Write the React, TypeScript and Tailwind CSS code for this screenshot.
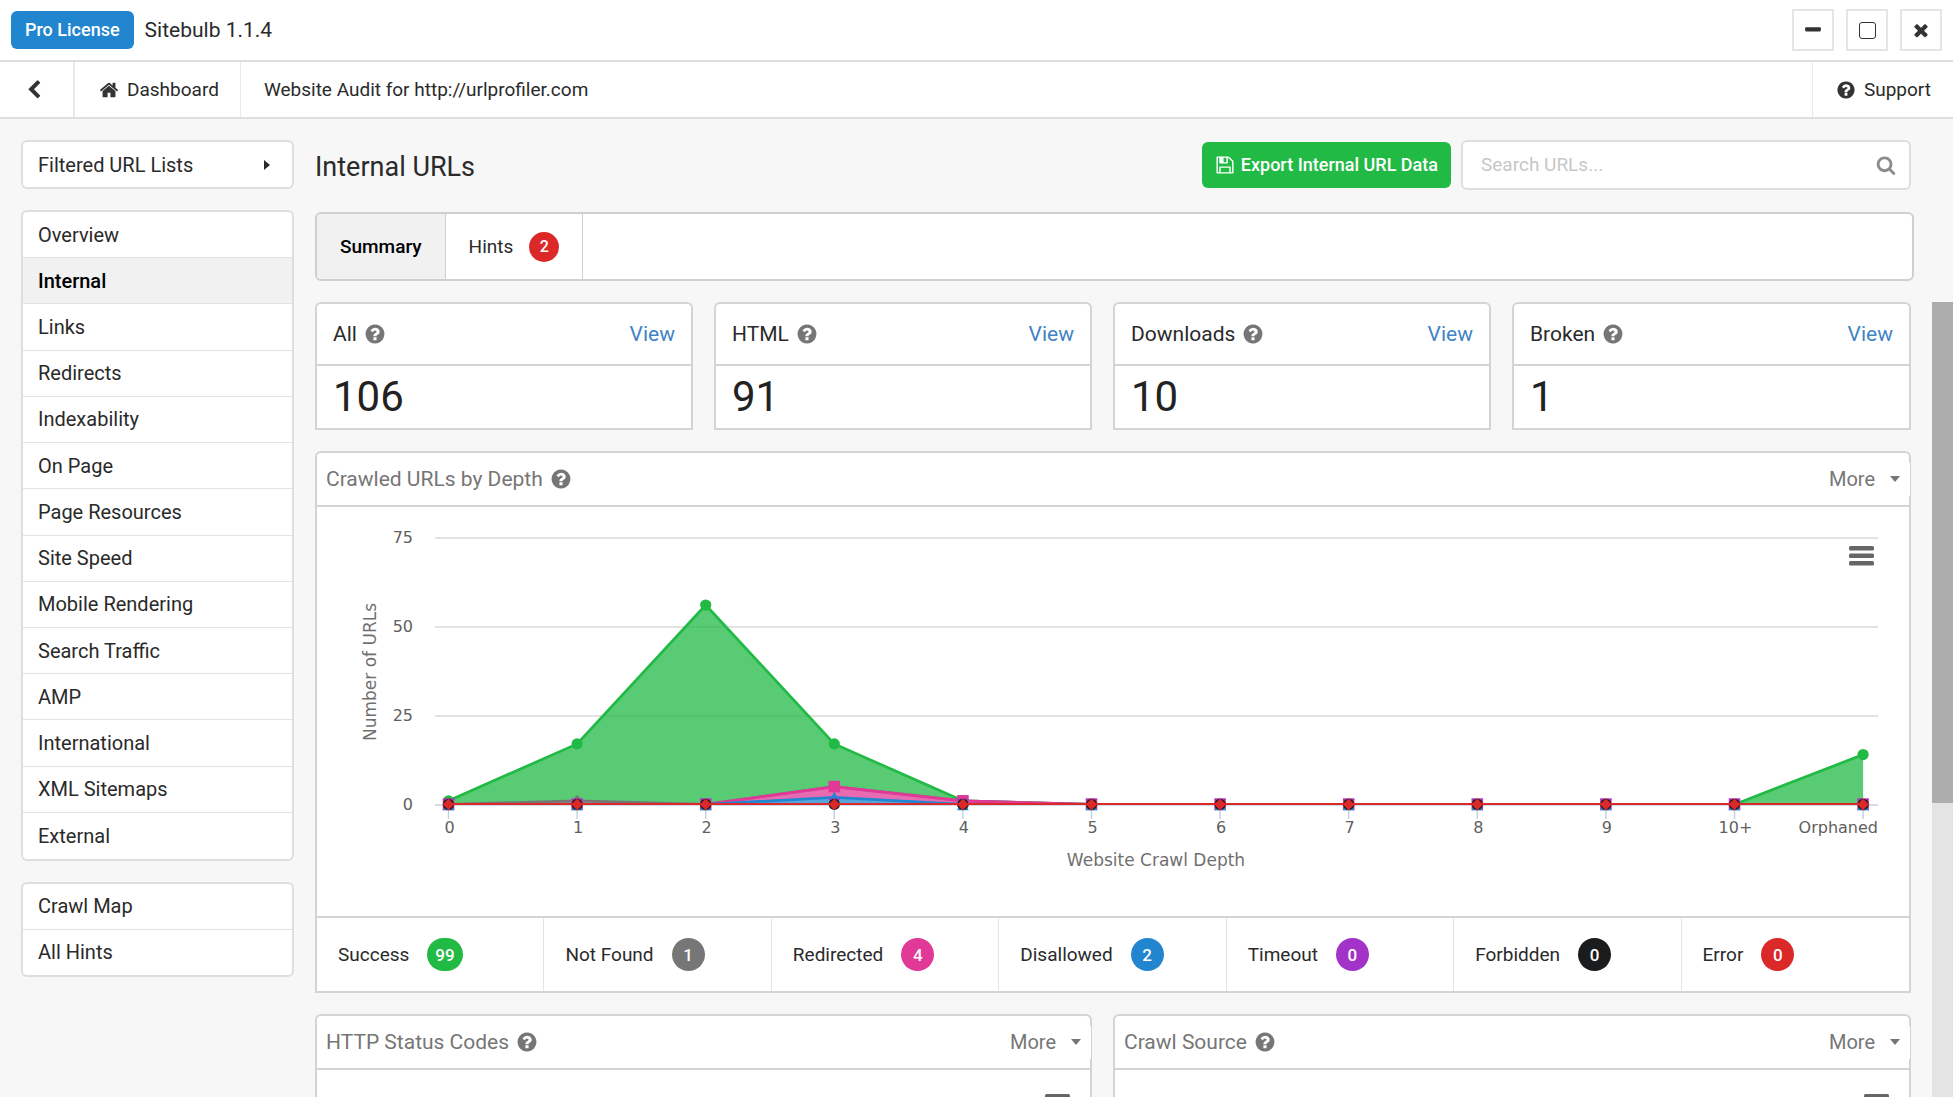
import { useState } from 'react';

const PATHS = {
  question:
    'M1024 1376v-192q0-14-9-23t-23-9h-192q-14 0-23 9t-9 23v192q0 14 9 23t23 9h192q14 0 23-9t9-23zM1280 704q0-88-55.5-163t-138.5-116-170-41q-243 0-371 213-15 24 8 42l132 100q7 6 19 6 16 0 25-12 53-68 86-92 34-24 86-24 48 0 85.5 26t37.5 59q0 38-20 61t-68 45q-63 28-115.5 86.5t-52.5 125.5v36q0 14 9 23t23 9h192q14 0 23-9t9-23q0-19 21.5-49.5t54.5-49.5q32-18 49-28.5t46-35 44.5-48 28-60.5 12.5-81zM1664 896q0 209-103 385.5t-279.5 279.5-385.5 103-385.5-103-279.5-279.5-103-385.5 103-385.5 279.5-279.5 385.5-103 385.5 103 279.5 279.5 103 385.5z',
  home: 'M1472 992v480q0 26-19 45t-45 19h-384v-384h-256v384h-384q-26 0-45-19t-19-45v-480q0-1 .5-3t.5-3l575-474 575 474q1 2 1 6zm223-69l-62 74q-8 9-21 11h-3q-13 0-21-7l-692-577-692 577q-12 8-24 7-13-2-21-11l-62-74q-8-10-7-23.5t11-21.5l719-599q32-26 76-26t76 26l244 204v-195q0-14 9-23t23-9h192q14 0 23 9t9 23v408l219 182q10 8 11 21.5t-7 23.5z',
  chevronLeft:
    'M1427 301l-531 531 531 531q19 19 19 45t-19 45l-166 166q-19 19-45 19t-45-19l-742-742q-19-19-19-45t19-45l742-742q19-19 45-19t45 19l166 166q19 19 19 45t-19 45z',
  search:
    'M1216 832q0-185-131.5-316.5t-316.5-131.5-316.5 131.5-131.5 316.5 131.5 316.5 316.5 131.5 316.5-131.5 131.5-316.5zm512 832q0 52-38 90t-90 38q-54 0-90-38l-343-342q-179 124-399 124-143 0-273.5-55.5t-225-150-150-225-55.5-273.5 55.5-273.5 150-225 225-150 273.5-55.5 273.5 55.5 225 150 150 225 55.5 273.5q0 220-124 399l343 343q37 37 37 90z',
  times:
    'M1490 1322q0 40-28 68l-136 136q-28 28-68 28t-68-28l-294-294-294 294q-28 28-68 28t-68-28l-136-136q-28-28-28-68t28-68l294-294-294-294q-28-28-28-68t28-68l136-136q28-28 68-28t68 28l294 294 294-294q28-28 68-28t68 28l136 136q28 28 28 68t-28 68l-294 294 294 294q28 28 28 68z',
  minus:
    'M1600 736v192q0 40-28 68t-68 28h-1216q-40 0-68-28t-28-68v-192q0-40 28-68t68-28h1216q40 0 68 28t28 68z',
  save: 'M512 1536h768v-384h-768v384zm896 0h128v-896q0-14-10-38.5t-20-34.5l-281-281q-10-10-34-20t-39-10v416q0 40-28 68t-68 28h-576q-40 0-68-28t-28-68v-416h-128v1280h128v-416q0-40 28-68t68-28h832q40 0 68 28t28 68v416zm-384-928v-320q0-13-9.5-22.5t-22.5-9.5h-192q-13 0-22.5 9.5t-9.5 22.5v320q0 13 9.5 22.5t22.5 9.5h192q13 0 22.5-9.5t9.5-22.5zm640 32v928q0 40-28 68t-68 28h-1344q-40 0-68-28t-28-68v-1344q0-40 28-68t68-28h928q40 0 88 20t76 48l280 280q28 28 48 76t20 88z',
};

function Icon({ name, className }: { name: keyof typeof PATHS; className: string }) {
  return (
    <svg viewBox="0 0 1792 1792" fill="currentColor" aria-hidden="true" className={className}>
      <path d={PATHS[name]} />
    </svg>
  );
}

const navItems = [
  'Overview',
  'Internal',
  'Links',
  'Redirects',
  'Indexability',
  'On Page',
  'Page Resources',
  'Site Speed',
  'Mobile Rendering',
  'Search Traffic',
  'AMP',
  'International',
  'XML Sitemaps',
  'External',
];

const stats = [
  { label: 'All', value: 106 },
  { label: 'HTML', value: 91 },
  { label: 'Downloads', value: 10 },
  { label: 'Broken', value: 1 },
];

const statuses = [
  { label: 'Success', count: 99, color: 'bg-[#21ba45]' },
  { label: 'Not Found', count: 1, color: 'bg-[#767676]' },
  { label: 'Redirected', count: 4, color: 'bg-[#e03997]' },
  { label: 'Disallowed', count: 2, color: 'bg-[#2185d0]' },
  { label: 'Timeout', count: 0, color: 'bg-[#a333c8]' },
  { label: 'Forbidden', count: 0, color: 'bg-[#1b1c1d]' },
  { label: 'Error', count: 0, color: 'bg-[#db2828]' },
];

// Chart geometry
const depths = ['0', '1', '2', '3', '4', '5', '6', '7', '8', '9', '10+', 'Orphaned'];
const LEFT = 118;
const RIGHT = 1561;
const BASE = 298;
const px = (i: number) => 131.5 + i * 128.6;
const py = (v: number) => BASE - 0.6 - v * 3.56;

type Shape = 'circle' | 'square' | 'diamond' | 'triangle' | 'triangleDown';

const zeros = [0, 0, 0, 0, 0, 0, 0, 0, 0, 0, 0, 0];

const series: { color: string; shape: Shape; data: number[] }[] = [
  { color: '#21ba45', shape: 'circle', data: [1, 16, 56, 12, 0, 0, 0, 0, 0, 0, 0, 14] },
  { color: '#767676', shape: 'diamond', data: [0, 1, 0, 0, 0, 0, 0, 0, 0, 0, 0, 0] },
  { color: '#e03997', shape: 'square', data: [0, 0, 0, 3, 1, 0, 0, 0, 0, 0, 0, 0] },
  { color: '#2185d0', shape: 'triangle', data: [0, 0, 0, 2, 0, 0, 0, 0, 0, 0, 0, 0] },
  { color: '#a333c8', shape: 'triangleDown', data: zeros },
  { color: '#1b1c1d', shape: 'circle', data: zeros },
  { color: '#db2828', shape: 'diamond', data: zeros },
];

// The areas are stacked, with the last series at the bottom
const stacked = series.map((s, n) => {
  const bottom = zeros.map((_, i) => series.slice(n + 1).reduce((sum, r) => sum + r.data[i], 0));
  return { ...s, bottom, top: s.data.map((v, i) => v + bottom[i]) };
});

function Marker({ shape, x, y, color }: { shape: Shape; x: number; y: number; color: string }) {
  if (shape === 'circle') return <circle cx={x} cy={y} r="5.6" fill={color} />;
  const d = {
    square: 'M-5.8-5.8H5.8V5.8H-5.8Z',
    diamond: 'M0-5.8L5.8 0L0 5.8L-5.8 0Z',
    triangle: 'M0-5.8L5.8 5.8H-5.8Z',
    triangleDown: 'M-5.8-5.8H5.8L0 5.8Z',
  }[shape];
  return <path d={d} transform={`translate(${x} ${y})`} fill={color} />;
}

function MenuBars({ x, y }: { x: number; y: number }) {
  return (
    <g fill="#666">
      {[0, 7.5, 15].map(dy => (
        <rect key={dy} x={x} y={y + dy} width="25" height="4.6" rx="1.5" />
      ))}
    </g>
  );
}

function DepthChart() {
  return (
    <svg
      viewBox="0 0 1592 409"
      className="block w-full font-['DejaVu_Sans',sans-serif]"
      role="img"
      aria-label="Crawled URLs by Depth"
    >
      <clipPath id="plot">
        <rect x={LEFT} y="31" width={RIGHT - LEFT} height={BASE - 31} />
      </clipPath>
      {[75, 50, 25, 0].map(v => (
        <g key={v}>
          <path d={`M${LEFT} ${BASE - v * 3.56}H${RIGHT}`} stroke={v ? '#d8d8d8' : '#c0d0e0'} strokeWidth="1.6" />
          <text x="96" y={BASE - v * 3.56 + 5} textAnchor="end" fontSize="16" fill="#606060">
            {v}
          </text>
        </g>
      ))}
      {depths.map((d, i) => (
        <g key={d}>
          <path d={`M${px(i)} ${BASE}v14`} stroke="#c0d0e0" strokeWidth="1.4" />
          <text
            x={d === 'Orphaned' ? RIGHT : px(i) + 1}
            y="326"
            textAnchor={d === 'Orphaned' ? 'end' : 'middle'}
            fontSize="16"
            fill="#606060"
          >
            {d}
          </text>
        </g>
      ))}
      {stacked.map((s, n) => {
        const line = s.top.map((v, i) => `${px(i)} ${py(v)}`).join('L');
        const back = s.bottom.map((v, i) => `${px(i)} ${py(v)}`).reverse().join('L');
        return (
          <g key={n}>
            <g clipPath="url(#plot)">
              <path d={`M${line}L${back}Z`} fill={s.color} fillOpacity="0.75" />
              <path d={`M${line}`} fill="none" stroke={s.color} strokeWidth="2.7" strokeLinejoin="round" />
            </g>
            {s.top.map((v, i) => (
              <Marker key={i} shape={s.shape} x={px(i)} y={py(v)} color={s.color} />
            ))}
          </g>
        );
      })}
      <text x="839" y="359" textAnchor="middle" fontSize="17" fill="#707070">
        Website Crawl Depth
      </text>
      <text transform="translate(59 165) rotate(-90)" textAnchor="middle" fontSize="17" fill="#707070">
        Number of URLs
      </text>
      <MenuBars x={1532} y={39} />
    </svg>
  );
}

function PanelHeader({ title }: { title: string }) {
  return (
    <div className="flex h-[54px] items-center border-b-2 border-[#d4d4d5] pl-[9px] text-[#767676]">
      <h2 className="text-[21px] leading-[24px]">{title}</h2>
      <Icon name="question" className="ml-[7px] size-[22px]" />
      <button className="relative -mr-px ml-auto flex h-[33px] items-center gap-[15px] bg-white pr-[10px] text-[20px] leading-[24px]">
        More
        <svg viewBox="0 0 10 6" fill="currentColor" aria-hidden="true" className="h-[6px] w-[10px]">
          <path d="M0 0h10L5 6z" />
        </svg>
      </button>
    </div>
  );
}

function ChartPanel({ title }: { title: string }) {
  return (
    <section className="h-[400px] rounded-t-md border-2 border-[#d4d4d5] bg-white">
      <PanelHeader title={title} />
      <div className="flex justify-end pt-[24px] pr-[20px]">
        <svg viewBox="0 0 25 20" aria-hidden="true" className="h-[20px] w-[25px]">
          <MenuBars x={0} y={0} />
        </svg>
      </div>
    </section>
  );
}

export default function App() {
  const [active, setActive] = useState('Internal');
  const [tab, setTab] = useState('Summary');
  const [query, setQuery] = useState('');

  return (
    <div className="flex h-screen flex-col overflow-hidden bg-[#f7f7f7] font-[Roboto,sans-serif] text-[19px] leading-[24px] text-[#2a2a2a]">
      {/* Title bar */}
      <header className="flex h-[62px] shrink-0 items-center border-b-2 border-[#dededf] bg-white px-[11px]">
        <button className="h-[38px] rounded-md bg-[#2185d0] px-[14px] text-[18px] font-medium text-white">Pro License</button>
        <span className="ml-[11px] text-[21px]">Sitebulb 1.1.4</span>
        <div className="ml-auto flex gap-[12px] text-[#333]">
          <button aria-label="Minimise" className="flex size-[42px] items-center justify-center border-2 border-[#e5e5e6]">
            <Icon name="minus" className="size-[20px]" />
          </button>
          <button aria-label="Maximise" className="flex size-[42px] items-center justify-center border-2 border-[#e5e5e6]">
            <span className="size-[17px] rounded-[3px] border border-[#333]" />
          </button>
          <button aria-label="Close" className="flex size-[42px] items-center justify-center border-2 border-[#e5e5e6]">
            <Icon name="times" className="size-[20px]" />
          </button>
        </div>
      </header>

      {/* Breadcrumb bar */}
      <nav className="flex h-[57px] shrink-0 border-b-2 border-[#dededf] bg-white">
        <a href="#back" aria-label="Back" className="flex w-[75px] items-center border-r-2 border-[#e9e9ea] pl-[24px] text-[#333]">
          <Icon name="chevronLeft" className="size-[20px]" />
        </a>
        <a href="#dashboard" className="flex items-center border-r border-[#e9e9ea] pr-[21px] pl-[24px]">
          <Icon name="home" className="mr-[8px] size-[20px] text-[#333]" />
          Dashboard
        </a>
        <span className="flex items-center pl-[23px]">Website Audit for http://urlprofiler.com</span>
        <a href="#support" className="ml-auto flex items-center border-l border-[#e9e9ea] pr-[22px] pl-[23px]">
          <Icon name="question" className="mr-[8px] size-[20px] text-[#333]" />
          Support
        </a>
      </nav>

      <div className="flex min-h-0 flex-1 gap-[21px] pt-[21px] pl-[21px]">
        {/* Sidebar */}
        <aside className="flex w-[273px] shrink-0 flex-col gap-[21px] text-[20px]">
          <button className="flex h-[49px] shrink-0 items-center justify-between rounded-md border-2 border-[#dededf] bg-white pr-[22px] pl-[15px]">
            Filtered URL Lists
            <svg viewBox="0 0 6 10" fill="currentColor" aria-hidden="true" className="h-[10px] w-[6px]">
              <path d="M0 0v10L6 5z" />
            </svg>
          </button>
          <nav className="grid h-[651px] shrink-0 auto-rows-fr divide-y divide-[#e3e3e4] overflow-hidden rounded-md border-2 border-[#dededf] bg-white">
            {navItems.map(item => (
              <a
                key={item}
                href="#section"
                onClick={() => setActive(item)}
                className={`flex items-center pl-[15px] ${active === item ? 'bg-[#f1f1f1] font-medium text-black' : ''}`}
              >
                {item}
              </a>
            ))}
          </nav>
          <nav className="grid h-[95px] shrink-0 auto-rows-fr divide-y divide-[#e3e3e4] rounded-md border-2 border-[#dededf] bg-white">
            <a href="#crawl-map" className="flex items-center pl-[15px]">Crawl Map</a>
            <a href="#all-hints" className="flex items-center pl-[15px]">All Hints</a>
          </nav>
        </aside>

        <main className="flex min-w-0 flex-1 flex-col">
          <div className="flex h-[50px] shrink-0 items-center pr-[42px]">
            <h1 className="pt-1 text-[27px] leading-[32px]">Internal URLs</h1>
            <button className="ml-auto flex h-[46px] items-center gap-[6px] rounded-md bg-[#21ba45] px-[13px] text-[18px] font-medium text-white">
              <Icon name="save" className="size-[20px]" />
              Export Internal URL Data
            </button>
            <div className="relative ml-[10px]">
              <input
                aria-label="Search URLs"
                placeholder="Search URLs..."
                value={query}
                onChange={e => setQuery(e.target.value)}
                className="h-[50px] w-[450px] rounded-md border-2 border-[#dededf] bg-white pr-[48px] pb-[2px] pl-[18px] placeholder:text-[#c7c7c8]"
              />
              <Icon name="search" className="pointer-events-none absolute top-[15px] right-[15px] size-[20px] text-[#8c8c8c]" />
            </div>
          </div>

          <div className="mt-[22px] mr-[39px] flex h-[69px] shrink-0 overflow-hidden rounded-md border-2 border-[#cfcfd0] bg-white">
            {['Summary', 'Hints'].map(t => (
              <button
                key={t}
                onClick={() => setTab(t)}
                className={`flex items-center border-r border-[#cfcfd0] px-[23px] ${tab === t ? 'bg-[#f1f1f1] font-medium text-black' : ''}`}
              >
                {t}
                {t === 'Hints' && (
                  <span className="ml-[16px] flex size-[30px] items-center justify-center rounded-full bg-[#db2828] text-[16px] font-medium text-white">
                    2
                  </span>
                )}
              </button>
            ))}
          </div>

          <div className="mt-[21px] flex min-h-0 flex-1">
            <div className="min-w-0 flex-1 pr-[21px]">
              <div className="grid grid-cols-4">
                {stats.map(s => (
                  <div key={s.label} className="pr-[21px] last:pr-0">
                    <div className="rounded-t-md border-2 border-[#d4d4d5] bg-white">
                      <div className="flex h-[62px] items-center border-b-2 border-[#d4d4d5] px-[16px] text-[21px]">
                        {s.label}
                        <Icon name="question" className="ml-[7px] size-[22px] text-[#767676]" />
                        <a href="#view" className="ml-auto text-[#4183c4]">View</a>
                      </div>
                      <div className="flex h-[62px] items-center px-[16px] text-[42px] leading-[48px] text-[#222]">{s.value}</div>
                    </div>
                  </div>
                ))}
              </div>

              <section className="mt-[21px] rounded-t-md border-2 border-[#d4d4d5] bg-white">
                <PanelHeader title="Crawled URLs by Depth" />
                <DepthChart />
                <div className="grid grid-cols-7 divide-x divide-[#e5e5e6] border-t-2 border-[#d4d4d5]">
                  {statuses.map(s => (
                    <div key={s.label} className="flex h-[73px] items-center pl-[21px]">
                      {s.label}
                      <span className={`ml-[18px] flex h-[33px] min-w-[33px] items-center justify-center rounded-full px-2 text-[17px] font-medium text-white ${s.color}`}>
                        {s.count}
                      </span>
                    </div>
                  ))}
                </div>
              </section>

              <div className="mt-[21px] grid grid-cols-2">
                <div className="pr-[21px]">
                  <ChartPanel title="HTTP Status Codes" />
                </div>
                <ChartPanel title="Crawl Source" />
              </div>
            </div>

            {/* Scrollbar track */}
            <div className="w-[21px] shrink-0 bg-[#e4e4e4]">
              <div className="h-[501px] bg-[#adadad]" />
            </div>
          </div>
        </main>
      </div>
    </div>
  );
}
